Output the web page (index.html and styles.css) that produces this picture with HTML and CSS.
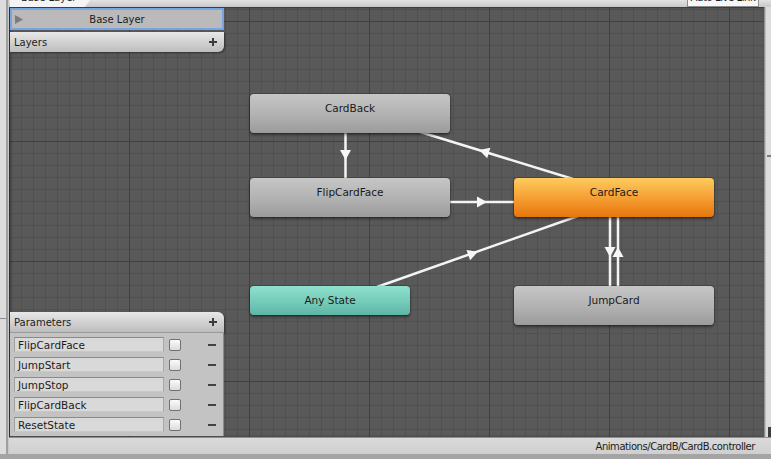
FILE: index.html
```html
<!DOCTYPE html>
<html>
<head>
<meta charset="utf-8">
<title>Animator</title>
<link rel="stylesheet" href="styles.css">
</head>
<body>
<div class="window">
  <div class="frame-left"></div>
  <div class="main">
    <div class="topbar">
      <div class="tab"><span>Base Layer</span></div>
      <div class="live-btn"><span>Auto Live Link</span></div>
    </div>
    <div class="middle">
      <div class="canvas">
        <div class="diagram">
          <svg class="edges" width="755" height="430" viewBox="0 0 755 430">
            <g stroke="#f4f4f4" stroke-width="2.5" fill="none">
              <line x1="336.5" y1="120" x2="336.5" y2="176"/>
              <line x1="435" y1="195" x2="510" y2="195"/>
              <line x1="408" y1="124" x2="564" y2="172"/>
              <line x1="368" y1="280" x2="569" y2="209"/>
              <line x1="601" y1="205" x2="601" y2="284"/>
              <line x1="609" y1="205" x2="609" y2="284"/>
            </g>
            <g fill="#f6f6f6">
              <polygon points="5,0 -5,-5.5 -5,5.5" transform="translate(336.5 148) rotate(90)"/>
              <polygon points="5,0 -5,-5.5 -5,5.5" transform="translate(473 195)"/>
              <polygon points="5,0 -5,-5.5 -5,5.5" transform="translate(475 144.5) rotate(-162.9)"/>
              <polygon points="5,0 -5,-5.5 -5,5.5" transform="translate(464 246.5) rotate(-19.5)"/>
              <polygon points="5,0 -5,-5.5 -5,5.5" transform="translate(601 245) rotate(90)"/>
              <polygon points="5,0 -5,-5.5 -5,5.5" transform="translate(609 245) rotate(-90)"/>
            </g>
          </svg>
          <div class="node gray n-cardback">CardBack</div>
          <div class="node gray n-flip">FlipCardFace</div>
          <div class="node orange n-cardface">CardFace</div>
          <div class="node gray n-jump">JumpCard</div>
          <div class="node teal n-any">Any State</div>
        </div>
        <div class="side">
          <div class="layers">
            <div class="base-layer">
              <svg class="tri" width="8" height="9" viewBox="0 0 8 9"><polygon points="0,0 8,4.5 0,9"/></svg>
              <span class="base-label">Base Layer</span>
            </div>
            <div class="panel-head layers-head">
              <span>Layers</span>
              <svg class="plus" width="8" height="8" viewBox="0 0 8 8"><rect x="3" y="0" width="2" height="8"/><rect x="0" y="3" width="8" height="2"/></svg>
            </div>
          </div>
          <div class="params">
            <div class="panel-head params-head">
              <span>Parameters</span>
              <svg class="plus" width="8" height="8" viewBox="0 0 8 8"><rect x="3" y="0" width="2" height="8"/><rect x="0" y="3" width="8" height="2"/></svg>
            </div>
            <div class="params-body">
              <div class="param-row"><div class="field">FlipCardFace</div><div class="check"></div><div class="minus"></div></div>
              <div class="param-row"><div class="field">JumpStart</div><div class="check"></div><div class="minus"></div></div>
              <div class="param-row"><div class="field">JumpStop</div><div class="check"></div><div class="minus"></div></div>
              <div class="param-row"><div class="field">FlipCardBack</div><div class="check"></div><div class="minus"></div></div>
              <div class="param-row"><div class="field">ResetState</div><div class="check"></div><div class="minus"></div></div>
            </div>
          </div>
        </div>
      </div>
      <div class="scroll-right"><div class="tick"></div><div class="thumb-end"></div></div>
    </div>
    <div class="statusbar">Animations/CardB/CardB.controller</div>
  </div>
</div>
<div class="bottom-strip"></div>
</body>
</html>
```

FILE: styles.css
```css
html, body {
  margin: 0;
  padding: 0;
}
body {
  width: 771px;
  height: 459px;
  overflow: hidden;
  font-family: "DejaVu Sans", "Liberation Sans", sans-serif;
  color: #1c1c1c;
  background: #a4a4a4;
}
.window {
  display: flex;
  height: 454px;
}
.frame-left {
  width: 9px;
  flex: none;
  background:
    linear-gradient(to bottom, transparent 318px, #8a8a8a 318px, #8a8a8a 319px, transparent 319px) no-repeat 0 0 / 6px 100%,
    linear-gradient(to right, #dcdcdc 0, #dcdcdc 6px, #9f9f9f 6px, #9f9f9f 8px, #c9c9c9 8px, #c9c9c9 9px);
}
.main {
  flex: 1;
  min-width: 0;
  display: flex;
  flex-direction: column;
}
.topbar {
  height: 7px;
  flex: none;
  display: flex;
  overflow: hidden;
  background: linear-gradient(#e2e2e2, #c8c8c8);
}
.tab {
  width: 80px;
  margin-left: 1px;
  padding-left: 11px;
  box-sizing: border-box;
  background: #f4f4f4;
  clip-path: polygon(0 0, 100% 0, calc(100% - 5px) 100%, 0 100%);
  font-size: 10px;
}
.tab span,
.live-btn span {
  display: block;
  line-height: 12px;
  margin-top: -8px;
  white-space: nowrap;
}
.live-btn {
  margin-left: auto;
  margin-right: 12px;
  width: 72px;
  box-sizing: border-box;
  border: 1px solid #8c8c8c;
  border-top: 0;
  background: #f6f6f6;
  font-size: 10px;
  letter-spacing: -0.4px;
  text-align: center;
}
.middle {
  flex: 1;
  min-height: 0;
  display: flex;
}
.canvas {
  flex: 1;
  position: relative;
  display: flex;
  background-color: #595959;
  background-image:
    linear-gradient(to right, #414141 1px, transparent 1px),
    linear-gradient(to bottom, #414141 1px, transparent 1px),
    linear-gradient(to right, #505050 1px, transparent 1px),
    linear-gradient(to bottom, #505050 1px, transparent 1px);
  background-size: 120px 120px, 120px 120px, 12px 12px, 12px 12px;
  background-position: 0 0, 0 14px, 0 0, 0 2px;
  box-shadow: inset 0 1px 0 #3c3c3c, inset 2px 0 3px rgba(0, 0, 0, 0.35);
}
.diagram {
  position: absolute;
  inset: 0;
  z-index: 0;
}
.edges {
  position: absolute;
  left: 0;
  top: 0;
}
.node {
  position: absolute;
  box-sizing: border-box;
  width: 200px;
  height: 39px;
  padding-top: 8px;
  border-radius: 4px;
  text-align: center;
  font-size: 10.5px;
  line-height: 12px;
  color: #1a1a1a;
  box-shadow: 0 0 0 1px rgba(0, 0, 0, 0.12), 0 2px 3px rgba(0, 0, 0, 0.45);
}
.gray {
  background: linear-gradient(#c6c6c6, #b1b1b1 55%, #9b9b9b);
}
.orange {
  background: linear-gradient(#ffcb5e, #f49c31 55%, #e6760a);
}
.teal {
  background: linear-gradient(#8fe1cd, #74cbb8 55%, #5fb5a4);
}
.n-cardback { left: 241px; top: 87px; }
.n-flip { left: 241px; top: 171px; }
.n-cardface { left: 505px; top: 171px; }
.n-jump { left: 505px; top: 279px; }
.n-any { left: 241px; top: 279px; width: 160px; height: 29px; }

.side {
  position: relative;
  z-index: 1;
  width: 214px;
  margin-left: 1px;
  padding: 1px 0;
  box-sizing: border-box;
  display: flex;
  flex-direction: column;
  justify-content: space-between;
}
.layers {
  display: flex;
  flex-direction: column;
  gap: 2px;
}
.base-layer {
  height: 22px;
  box-sizing: border-box;
  border: 2px solid #78a4e4;
  background: #bababa;
  display: flex;
  align-items: center;
  padding: 0 11px 0 3px;
  font-size: 10px;
}
.tri {
  flex: none;
  fill: #7c7c7c;
}
.base-label {
  flex: 1;
  text-align: center;
}
.panel-head {
  display: flex;
  align-items: center;
  justify-content: space-between;
  padding: 0 7px 0 4px;
  font-size: 10px;
  background: linear-gradient(#e8e8e8, #d2d2d2 50%, #bdbdbd);
  box-shadow: 1px 1px 2px rgba(0, 0, 0, 0.45);
}
.layers-head {
  height: 20px;
  border-bottom-right-radius: 6px;
}
.params-head {
  height: 21px;
  border-top-right-radius: 6px;
  border-bottom: 1px solid #9a9a9a;
  box-sizing: border-box;
}
.plus {
  fill: #3c3c3c;
}
.params {
  display: flex;
  flex-direction: column;
}
.params-body {
  height: 103px;
  box-sizing: border-box;
  padding: 4px 7px 0 4px;
  background: #c3c3c3;
  border-right: 1px solid #8a8a8a;
  display: flex;
  flex-direction: column;
  gap: 5px;
}
.param-row {
  display: flex;
  align-items: center;
  height: 15px;
}
.field {
  width: 150px;
  height: 15px;
  box-sizing: border-box;
  border: 1px solid;
  border-color: #8a8a8a #a8a8a8 #c8c8c8 #a0a0a0;
  background: #d9d9d9;
  padding-left: 3px;
  font-size: 10.5px;
  line-height: 14px;
  white-space: nowrap;
}
.check {
  width: 12px;
  height: 12px;
  margin-left: 5px;
  box-sizing: border-box;
  border: 1px solid #707070;
  border-radius: 2px;
  background: linear-gradient(#fbfbfb, #dcdcdc);
}
.minus {
  margin-left: auto;
  width: 8px;
  height: 2px;
  background: #424242;
}
.scroll-right {
  width: 7px;
  flex: none;
  box-sizing: border-box;
  border-left: 1px solid #8e8e8e;
  background: linear-gradient(to right, #c0c0c0 0, #c0c0c0 1px, #dcdcdc 1px);
  display: flex;
  flex-direction: column;
  align-items: flex-end;
}
.tick {
  margin-top: 148px;
  width: 4px;
  height: 2px;
  background: #7a7a7a;
}
.thumb-end {
  margin-top: auto;
  width: 3px;
  height: 10px;
  background: #3c3c3c;
}
.statusbar {
  height: 17px;
  flex: none;
  box-sizing: border-box;
  border-top: 1px solid #8f8f8f;
  background: linear-gradient(#dadada, #cfcfcf);
  padding: 2px 16px 0 0;
  font-size: 10px;
  line-height: 14px;
  letter-spacing: -0.45px;
  text-align: right;
  white-space: nowrap;
}
.bottom-strip {
  height: 5px;
  background: #a4a4a4;
}
```
